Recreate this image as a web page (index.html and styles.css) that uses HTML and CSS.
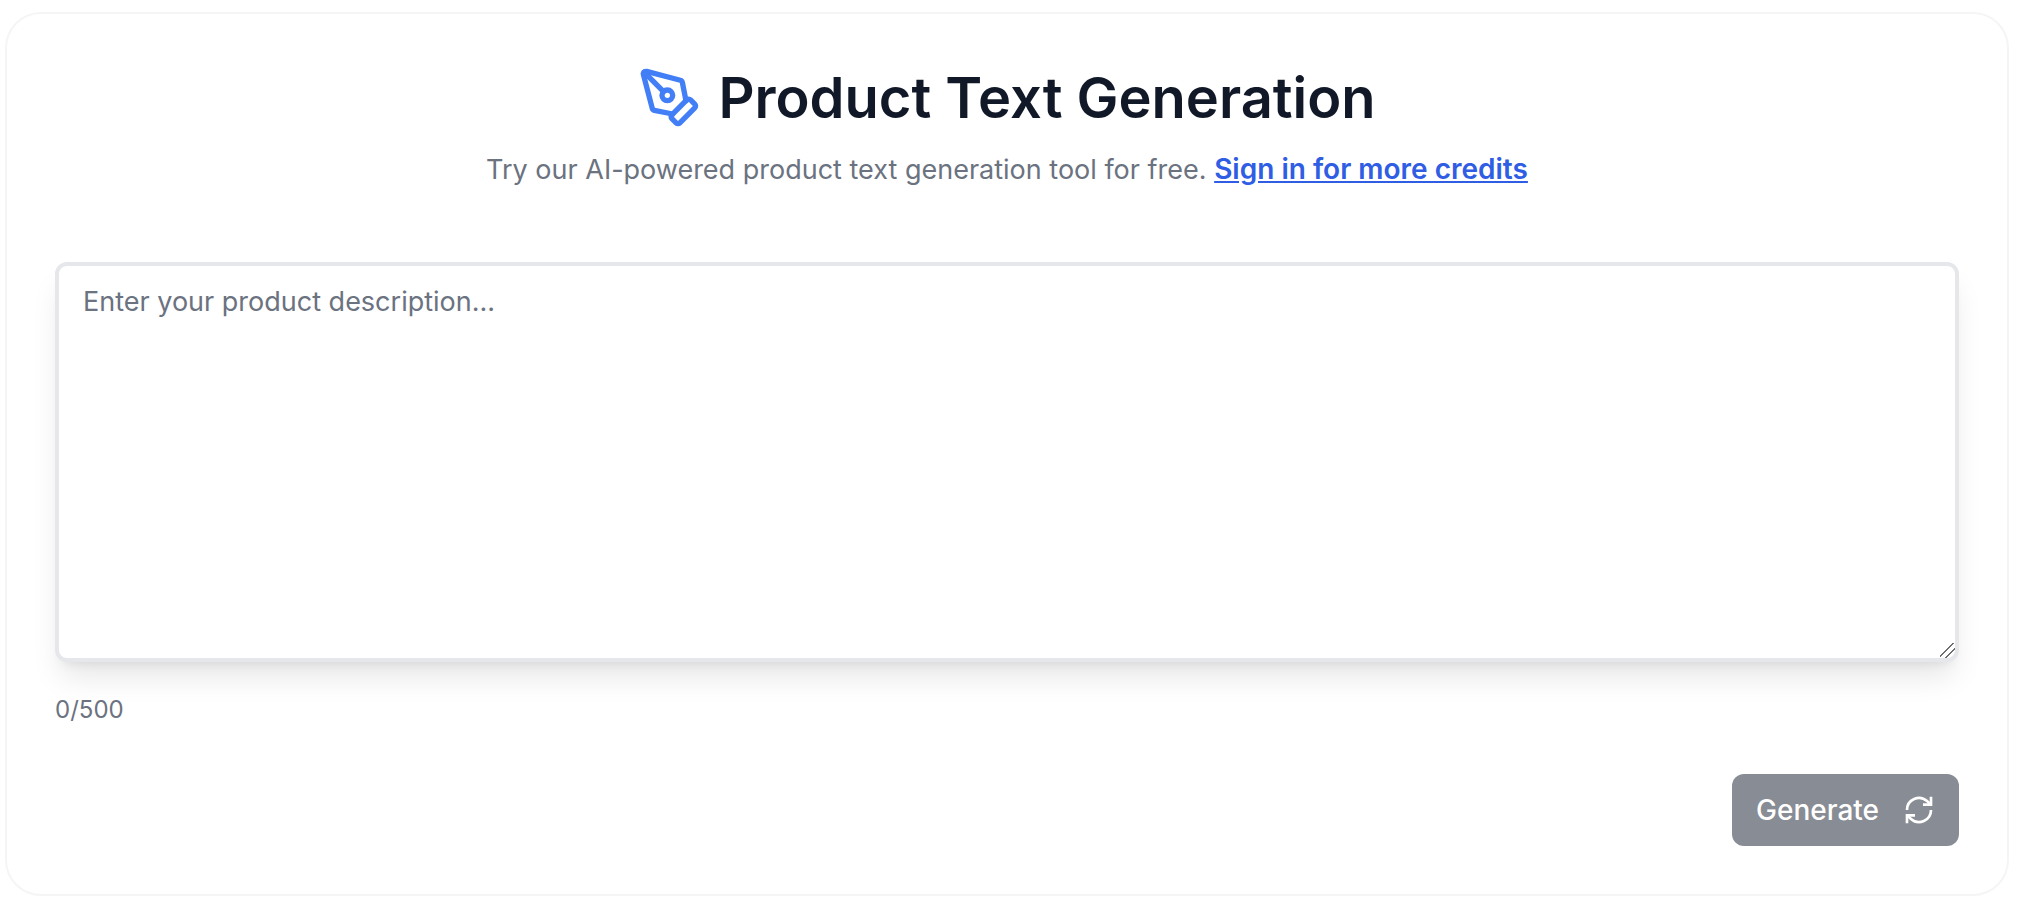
FILE: index.html
```
<!DOCTYPE html>
<html lang="en">
<head>
	<meta charset="utf-8">
	<meta name="viewport" content="width=device-width">
	<title>Product Text Generation</title>
	<link rel="stylesheet" href="styles.css">
</head>
<body>
	<main class="card">
		<header class="header">
			<h1 class="title">
				<svg class="title-icon" viewBox="0 0 24 24" aria-hidden="true">
					<path d="M15.707 21.293a1 1 0 0 1-1.414 0l-1.586-1.586a1 1 0 0 1 0-1.414l5.586-5.586a1 1 0 0 1 1.414 0l1.586 1.586a1 1 0 0 1 0 1.414z" />
					<path d="m18 13-1.375-6.874a1 1 0 0 0-.746-.776L3.235 2.028a1 1 0 0 0-1.207 1.207L5.35 15.879a1 1 0 0 0 .776.746L13 18" />
					<path d="m2.3 2.3 7.286 7.286" />
					<circle cx="11" cy="11" r="2" />
				</svg>
				Product Text Generation
			</h1>
			<p class="subtitle">Try our AI-powered product text generation tool for free. <a href="#">Sign in for more credits</a></p>
		</header>

		<form class="form">
			<textarea class="description" id="description" maxlength="500" aria-label="Product description" placeholder="Enter your product description..."></textarea>
			<output class="counter" for="description">0/500</output>
			<button class="generate" type="submit" disabled>
				Generate
				<svg class="generate-icon" viewBox="0 0 24 24" aria-hidden="true">
					<path d="M21 2v6h-6" />
					<path d="M3 12a9 9 0 0 1 15-6.700L21 8" />
					<path d="M3 22v-6h6" />
					<path d="M21 12a9 9 0 0 1-15 6.700L3 16" />
				</svg>
			</button>
		</form>
	</main>

	<script>
		let description = document.querySelector('.description');
		let counter = document.querySelector('.counter');
		let generate = document.querySelector('.generate');

		description.addEventListener('input', () => {
			counter.textContent = description.value.length + '/500';
			generate.disabled = description.value.trim() === '';
		});
	</script>
</body>
</html>
```
FILE: styles.css
```
* {
	box-sizing: border-box;
}

body {
	background: white;
	font-family: Inter, "Liberation Sans", sans-serif;
	margin: 12px 9px 8px 5px;
}

.card {
	border: 2px solid rgb(245, 245, 246);
	border-radius: 36px;
	padding: 48px;
}

.header {
	text-align: center;
}

.title {
	align-items: center;
	color: rgb(17, 24, 39);
	display: flex;
	font-size: 56px;
	font-weight: 600;
	gap: 16px;
	justify-content: center;
	line-height: 72px;
	margin: 0;
}
.title-icon {
	fill: none;
	height: 64px;
	stroke: rgb(66, 126, 246);
	stroke-linecap: round;
	stroke-linejoin: round;
	stroke-width: 2;
	width: 64px;
}

.subtitle {
	color: rgb(107, 114, 128);
	font-size: 27px;
	line-height: 40px;
	margin: 16px 0 72px;
}
.subtitle a {
	color: rgb(47, 93, 228);
	font-size: 28px;
	font-weight: 600;
	line-height: 1;
}

.form {
	display: flex;
	flex-direction: column;
}
.description {
	background: white;
	border: 4px solid rgb(229, 231, 235);
	border-radius: 12px;
	box-shadow: 0 20px 30px -6px rgba(0, 0, 0, 0.1), 0 8px 12px -8px rgba(0, 0, 0, 0.1);
	color: rgb(17, 24, 39);
	font: inherit;
	font-size: 27px;
	height: 400px;
	line-height: 40px;
	padding: 16px 24px;
	resize: vertical;
}
.description::placeholder {
	color: rgb(107, 114, 128);
}
.description::-webkit-resizer {
	background: linear-gradient(135deg, transparent 40%, rgb(110, 110, 110) 41%, rgb(110, 110, 110) 47%, transparent 48%, transparent 65%, rgb(110, 110, 110) 66%, rgb(110, 110, 110) 72%, transparent 73%);
}
.counter {
	color: rgb(107, 114, 128);
	font-size: 24px;
	line-height: 32px;
	margin: 32px 0 48px;
}

.generate {
	align-items: center;
	align-self: flex-end;
	background: rgb(17, 24, 39);
	border: 0;
	border-radius: 12px;
	color: white;
	cursor: pointer;
	display: flex;
	font: inherit;
	font-size: 28px;
	font-weight: 500;
	gap: 24px;
	height: 72px;
	padding: 0 24px;
}
.generate:disabled {
	background: rgb(136, 140, 148);
	cursor: default;
}
.generate-icon {
	fill: none;
	height: 32px;
	stroke: currentColor;
	stroke-width: 2;
	width: 32px;
}
```
